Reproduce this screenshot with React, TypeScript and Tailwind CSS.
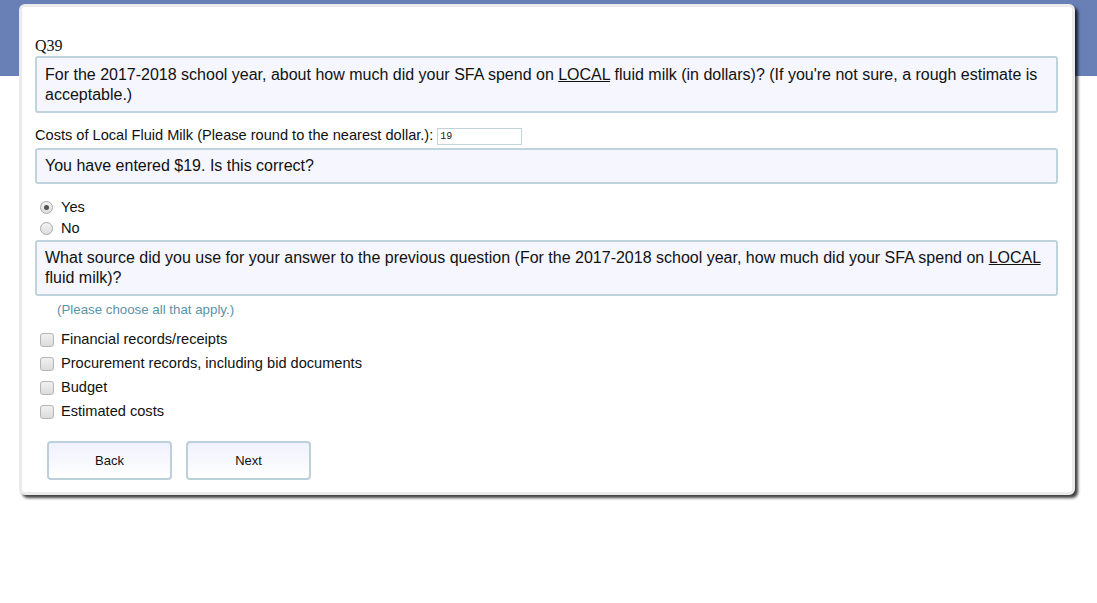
import React from "react";

const font = { fontFamily: '"Liberation Sans", Arial, sans-serif' };

function QBox({ children, pt = "pt-[6px]" }: { children: React.ReactNode; pt?: string }) {
  return (
    <div className={`rounded-[3px] border-2 border-[#bfd3de] bg-[#f5f6fe] px-[8px] pb-[6px] text-[16px] leading-[20px] text-[#111] ${pt}`}>
      {children}
    </div>
  );
}

function Radio({ checked, label }: { checked?: boolean; label: string }) {
  return (
    <label className="flex h-[21px] items-center gap-[8px] pl-[5px] text-[14.6px] text-[#111]">
      <span className="flex h-[13px] w-[13px] items-center justify-center rounded-full border border-[#a9a9a9] bg-gradient-to-b from-[#f3f3f3] to-[#dedede]">
        {checked && <span className="h-[5px] w-[5px] rounded-full bg-[#555]" />}
      </span>
      {label}
    </label>
  );
}

function Check({ label }: { label: string }) {
  return (
    <label className="flex h-[24px] items-center gap-[7px] pl-[5px] text-[14.6px] text-[#111]">
      <span className="h-[14px] w-[14px] rounded-[3px] border border-[#b5b5b5] bg-gradient-to-b from-[#f0f0f0] to-[#dcdcdc]" />
      {label}
    </label>
  );
}

export default function App() {
  return (
    <div className="relative min-h-[603px] w-[1097px] bg-white" style={font}>
      <div className="absolute left-0 top-0 h-[76px] w-full bg-[#6880b6]" />
      <div className="relative ml-[19px] pt-[4px]">
        <div className="w-[1056px] rounded-[6px] border-[3px] border-[#ebebeb] bg-white pb-[12px] pl-[13px] pr-[14px] pt-[29px] shadow-[3px_3px_3px_rgba(0,0,0,0.75)]">
          <div className="h-[20px] text-[16px] leading-[20px] text-[#111]" style={{ fontFamily: '"Liberation Serif", "Times New Roman", serif' }}>
            Q39
          </div>
          <QBox pt="pt-[7px]">
            For the 2017-2018 school year, about how much did your SFA spend on <u>LOCAL</u> fluid milk (in dollars)? (If you're not sure, a rough estimate is acceptable.)
          </QBox>
          <div className="mt-[13px] flex h-[20px] items-center text-[14.6px] text-[#111]">
            Costs of Local Fluid Milk (Please round to the nearest dollar.):
            <span className="ml-[4px] flex h-[17px] w-[85px] items-center border border-[#c3d3db] bg-white pl-[2px] text-[10px] text-[#222]" style={{ fontFamily: '"Liberation Mono", monospace' }}>
              19
            </span>
          </div>
          <div className="mt-[2px]">
            <QBox>You have entered $19. Is this correct?</QBox>
          </div>
          <div className="mb-[1px] mt-[13px]">
            <Radio checked label="Yes" />
            <Radio label="No" />
          </div>
          <QBox>
            What source did you use for your answer to the previous question (For the 2017-2018 school year, how much did your SFA spend on <u>LOCAL</u> fluid milk)?
          </QBox>
          <div className="mt-[4px] h-[20px] pl-[22px] text-[13.3px] leading-[20px] text-[#5b93a8]">(Please choose all that apply.)</div>
          <div className="mt-[8px]">
            <Check label="Financial records/receipts" />
            <Check label="Procurement records, including bid documents" />
            <Check label="Budget" />
            <Check label="Estimated costs" />
          </div>
          <div className="mt-[17px] flex gap-[14px] pl-[12px]">
            <button className="h-[39px] w-[125px] rounded-[4px] border-2 border-[#bcd0dc] bg-gradient-to-b from-[#eff1fd] to-white text-[13px] text-[#111]">
              Back
            </button>
            <button className="h-[39px] w-[125px] rounded-[4px] border-2 border-[#bcd0dc] bg-gradient-to-b from-[#eff1fd] to-white text-[13px] text-[#111]">
              Next
            </button>
          </div>
        </div>
      </div>
    </div>
  );
}
